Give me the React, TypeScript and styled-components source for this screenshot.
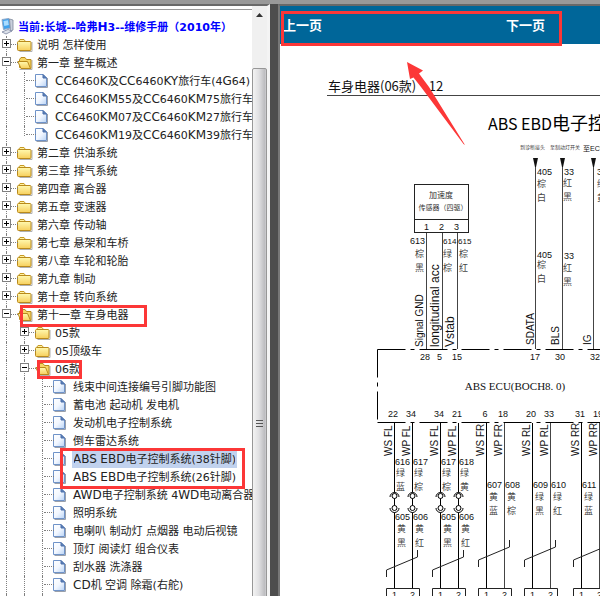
import React from "react";
import styled, { createGlobalStyle, css } from "styled-components";

const GlobalStyle = createGlobalStyle`
  *, *::before, *::after { box-sizing: border-box; }
  html, body { margin: 0; height: 100%; overflow: hidden; background: #ffffff; }
  #root { height: 100%; }
`;

const treeFont = `"DejaVu Sans", "Noto Sans CJK SC", sans-serif`;
const cjkFont = `"Noto Sans CJK SC", sans-serif`;
const cadFont = `"Liberation Sans", "Noto Sans CJK SC", sans-serif`;

const Window = styled.div`
  display: flex;
  flex-direction: column;
  height: 100vh;
  overflow: hidden;
`;

const TopEdge = styled.div`
  flex: none;
  height: 4px;
  background: #999999;
`;

const Frames = styled.div`
  flex: 1;
  min-height: 0;
  display: grid;
  grid-template-columns: 270px 8px minmax(0, 1fr);
`;

const TreeFrame = styled.nav`
  display: flex;
  min-width: 0;
  min-height: 0;
  border-top: 2px solid #696969;
  border-right: 3px solid #f4f4f4;
  background: #ffffff;
`;

const TreePane = styled.div`
  flex: 1;
  min-width: 0;
  overflow: hidden;
  padding-top: 3px;
`;

const Rule = styled.hr`
  height: 1px;
  margin: 0 0 8px;
  border: 0;
  background: #999999;
`;

const Splitter = styled.div`
  background: #4d4d4d;
`;

const Scrollbar = styled.div`
  flex: none;
  width: 15px;
  display: flex;
  flex-direction: column;
  background: #f0f0f0;
`;

const ScrollButton = styled.button`
  flex: none;
  height: 62px;
  padding: 7px 0 0;
  border: 0;
  background: transparent;
  display: flex;
  justify-content: center;
  align-items: flex-start;
`;

const ScrollThumb = styled.div`
  flex: none;
  height: 710px;
  border: 1px solid #979797;
  border-radius: 2px;
  background: linear-gradient(to right, #f3f3f3, #e0e0e2 45%, #bdbdc0 90%, #cfcfd2);
  display: flex;
  flex-direction: column;
  align-items: center;
  justify-content: center;
  gap: 2px;
`;

const Grip = styled.span`
  width: 7px;
  height: 1px;
  background: #555555;
`;

const TreeList = styled.ul`
  list-style: none;
  margin: 0;
  padding: 0;
  font: 11px/18px ${treeFont};
  color: #222222;
`;

const Row = styled.li`
  position: relative;
  display: flex;
  align-items: center;
  height: 18px;
  white-space: nowrap;
`;

const RootRow = styled(Row)`
  gap: 4px;
  font-weight: bold;
  color: #0000ff;
`;

const dotted = "1px dotted #808080";

const Guide = styled.span<{ $line: "full" | "end"; $join?: boolean }>`
  flex: none;
  position: relative;
  width: 18px;
  height: 18px;
  &::before {
    content: "";
    position: absolute;
    left: 6px;
    top: 0;
    height: ${(p) => (p.$line === "full" ? "18px" : "10px")};
    border-left: ${dotted};
  }
  ${(p) =>
    p.$join &&
    css`
      &::after {
        content: "";
        position: absolute;
        left: 8px;
        right: 0;
        top: 8px;
        border-top: ${dotted};
      }
    `}
`;

const Toggle = styled.button`
  position: absolute;
  z-index: 1;
  left: 2px;
  top: 3px;
  width: 9px;
  height: 9px;
  padding: 0;
  border: 0;
  background: #ffffff;
  svg { display: block; }
`;

const IconCell = styled.span`
  flex: none;
  width: 16px;
  height: 16px;
  margin: 0 4px 0 -1px;
  svg { display: block; }
`;

const NodeLink = styled.a<{ $selected?: boolean }>`
  color: inherit;
  text-decoration: none;
  line-height: 15px;
  ${(p) =>
    p.$selected &&
    css`
      background: #c1d2ee;
      outline: 2px solid #c1d2ee;
      outline-offset: -1px;
    `}
`;

const LatinRun = styled.span`
  font-size: 12px;
`;

const Mark = styled.span<{ $left: number; $top: number; $width: number; $height: number }>`
  position: absolute;
  z-index: 2;
  left: ${(p) => p.$left}px;
  top: ${(p) => p.$top}px;
  width: ${(p) => p.$width}px;
  height: ${(p) => p.$height}px;
  border: 3px solid #fc3737;
  pointer-events: none;
`;

const ContentFrame = styled.main`
  min-width: 0;
  min-height: 0;
  overflow: hidden;
  border-top: 2px solid #696969;
  border-left: 2px solid #777777;
  background: #ffffff;
`;

const PagerBar = styled.div`
  position: relative;
  display: flex;
  gap: 184px;
  height: 38px;
  padding: 0 3px;
  background: #006699;
`;

const PagerLink = styled.a`
  color: #ffffff;
  text-decoration: none;
  font: bold 13px/38px ${cjkFont};
`;

const Sheet = styled.article`
  position: relative;
`;

const SheetHeader = styled.header`
  margin: 0 0 0 47px;
  padding: 32px 0 0 1px;
  border-bottom: 1px solid #444444;
  color: #111111;
  font: 13px/19px ${cjkFont};
`;

const SheetNumber = styled.span`
  margin-left: 8px;
`;

const SheetTitle = styled.h1`
  margin: 13px 0 3px 208px;
  color: #000000;
  font: 18px/27px ${cjkFont};
  white-space: nowrap;
`;

const Latin = styled.span`
  font-size: 16px;
`;

const Diagram = styled.svg`
  display: block;
  overflow: visible;
`;

const Arrow = styled.svg`
  position: absolute;
  left: 126px;
  top: 17px;
`;

const FolderIcon = ({ open }: { open?: boolean }) => (
  <svg width="16" height="16" viewBox="0 0 16 16" aria-hidden="true">
    <defs>
      <linearGradient id="folder" x1="0" y1="0" x2="0" y2="1">
        <stop offset="0" stopColor="#fff9b0" />
        <stop offset="1" stopColor="#f7cf5c" />
      </linearGradient>
    </defs>
    <path d="M2.5 14.5h12.500V5" fill="none" stroke="#b0b0b0" />
    {open ? (
      <>
        <path d="M2.500 12.500V4.500l1.500-2h4l1.500 2h4.500v9z" fill="#f5d565" stroke="#b98a1c" />
        <path d="M0.800 6.500h9.700l3 7H4z" fill="url(#folder)" stroke="#b98a1c" />
      </>
    ) : (
      <>
        <path d="M1.500 4.500 3 2.500h4l1.500 2" fill="#fff3a0" stroke="#c79a25" />
        <rect x="0.500" y="4.500" width="13.500" height="9" rx="1" fill="url(#folder)" stroke="#b98a1c" />
      </>
    )}
  </svg>
);

const PageIcon = () => (
  <svg width="16" height="16" viewBox="1 0 16 16" aria-hidden="true">
    <defs>
      <linearGradient id="page" x1="0" y1="0" x2="1" y2="1">
        <stop offset="0" stopColor="#ffffff" />
        <stop offset="0.500" stopColor="#f2f7ff" />
        <stop offset="1" stopColor="#b9d3f5" />
      </linearGradient>
    </defs>
    <path d="M2.500 14.500h11V5" fill="none" stroke="#9aa0aa" />
    <path d="M1.500 1.500h7.500l3.500 3.500v8.500h-11z" fill="url(#page)" stroke="#6f93c9" />
    <path d="M9 1.500v3.500h3.500z" fill="#5f83bd" stroke="#4a6ea8" />
  </svg>
);

const ComputerIcon = () => (
  <svg width="14" height="18" viewBox="0 0 14 18" aria-hidden="true">
    <path d="M2 1.500 9 0.500l1.500 9.500-7 1.500z" fill="#3fa2ee" stroke="#8fa8c8" />
    <path d="M3.500 3 8 2.300l.8 4.700-4.500 1z" fill="#a9dcff" />
    <path d="M9.500 1 13 2v10l-2.500 1.500z" fill="#c9d0dc" stroke="#7c8798" strokeWidth="0.800" />
    <path d="m2 14 6-2.500 4 1.500-6 3z" fill="#dde2ea" stroke="#7a84a0" strokeWidth="0.800" />
  </svg>
);

const ToggleIcon = ({ open }: { open?: boolean }) => (
  <svg width="9" height="9" viewBox="0 0 9 9" aria-hidden="true">
    <rect x="0.500" y="0.500" width="8" height="8" fill="#ffffff" stroke="#808080" />
    <path d={open ? "M2 4.500h5" : "M2 4.500h5M4.500 2v5"} stroke="#000000" />
  </svg>
);

type MarkBox = [left: number, top: number, width: number, height: number];

interface TreeNode {
  label: string;
  level: number;
  kind: "closed" | "open" | "page";
  last?: boolean;
  selected?: boolean;
  mark?: MarkBox;
}

const folder = (label: string, level = 0): TreeNode => ({ label, level, kind: "closed" });
const page = (label: string, level: number, extra: Partial<TreeNode> = {}): TreeNode => ({
  label,
  level,
  kind: "page",
  ...extra,
});

const nodes: TreeNode[] = [
  folder("说明 怎样使用"),
  { label: "第一章 整车概述", level: 0, kind: "open" },
  page("CC6460K及CC6460KY旅行车(4G64)", 1),
  page("CC6460KM55及CC6460KM75旅行车", 1),
  page("CC6460KM07及CC6460KM27旅行车", 1),
  page("CC6460KM19及CC6460KM39旅行车", 1, { last: true }),
  folder("第二章 供油系统"),
  folder("第三章 排气系统"),
  folder("第四章 离合器"),
  folder("第五章 变速器"),
  folder("第六章 传动轴"),
  folder("第七章 悬架和车桥"),
  folder("第八章 车轮和轮胎"),
  folder("第九章 制动"),
  folder("第十章 转向系统"),
  { label: "第十一章 车身电器", level: 0, kind: "open", mark: [20, -1, 127, 22] },
  folder("05款", 1),
  folder("05顶级车", 1),
  { label: "06款", level: 1, kind: "open", mark: [37, 0, 45, 19] },
  page("线束中间连接编号引脚功能图", 2),
  page("蓄电池 起动机 发电机", 2),
  page("发动机电子控制系统", 2),
  page("倒车雷达系统", 2),
  page("ABS EBD电子控制系统(38针脚)", 2, { selected: true, mark: [60, -2, 185, 41] }),
  page("ABS EBD电子控制系统(26针脚)", 2),
  page("AWD电子控制系统 4WD电动离合器", 2),
  page("照明系统", 2),
  page("电喇叭 制动灯 点烟器 电动后视镜", 2),
  page("顶灯 阅读灯 组合仪表", 2),
  page("刮水器 洗涤器", 2),
  page("CD机 空调 除霜(右舵)", 2),
  page("音响系统", 2),
];

const Mixed = ({ text }: { text: string }) => (
  <>
    {text.split(/([A-Z]+)/).map((part, i) => (i % 2 ? <LatinRun key={i}>{part}</LatinRun> : part))}
  </>
);

const TreeRow = ({ node }: { node: TreeNode }) => (
  <Row>
    {Array.from({ length: node.level }, (_, i) => (
      <Guide key={i} $line="full" />
    ))}
    <Guide $line={node.last ? "end" : "full"} $join>
      {node.kind !== "page" && (
        <Toggle aria-label={node.label} aria-expanded={node.kind === "open"}>
          <ToggleIcon open={node.kind === "open"} />
        </Toggle>
      )}
    </Guide>
    <IconCell>{node.kind === "page" ? <PageIcon /> : <FolderIcon open={node.kind === "open"} />}</IconCell>
    <NodeLink href="#" $selected={node.selected}>
      <Mixed text={node.label} />
    </NodeLink>
    {node.mark && (
      <Mark $left={node.mark[0]} $top={node.mark[1]} $width={node.mark[2]} $height={node.mark[3]} />
    )}
  </Row>
);

const Label = ({ x, y, children, size = 9 }: { x: number; y: number; children: string; size?: number }) => (
  <text x={x} y={y} fontSize={size}>
    {children}
  </text>
);

const Vertical = ({ x, y, children, size = 10 }: { x: number; y: number; children: string; size?: number }) => (
  <text transform={`translate(${x} ${y}) rotate(-90)`} fontSize={size}>
    {children}
  </text>
);

const Colours = ({ x, y, names }: { x: number; y: number; names: string }) => (
  <g fill="#444444" fontSize="9">
    <text x={x} y={y}>{names[0]}</text>
    <text x={x} y={y + 14}>{names[1]}</text>
  </g>
);

const Wire = ({ x, from, to, dark }: { x: number; from: number; to: number; dark?: boolean }) => (
  <path d={`M${x} ${from}V${to}`} stroke={dark ? "#000000" : "#444444"} />
);

const pairs = [
  { x: 394, pins: ["22", "34"], end: "FL", upper: ["616", "617"], upperColours: ["绿蓝", "绿棕"], lower: ["605", "606"], colours: ["黄黑", "黄红"] },
  { x: 440, pins: ["34", "21"], end: "FL", upper: ["617", "618"], upperColours: ["绿棕", "绿黄"], lower: ["605", "606"], colours: ["黄黑", "黄红"] },
  { x: 486, pins: ["6", "18"], end: "FR", lower: ["607", "608"], colours: ["黄蓝", "黄棕"] },
  { x: 532, pins: ["20", "33"], end: "RL", lower: ["609", "610"], colours: ["绿黑", "绿红"] },
  { x: 581, pins: ["31", "19"], end: "RR", lower: ["611", "612"], colours: ["绿蓝", "绿黄"] },
];

const Coupling = ({ x }: { x: number }) => (
  <g fill="#ffffff" stroke="#000000">
    <path d={`M${x - 4.5} 497a4.500 4.500 0 1 1 9 0`} />
    <circle cx={x} cy="496" r="2.500" />
    <path d={`M${x - 4.5} 508a4.500 4.500 0 1 0 9 0`} />
    <circle cx={x} cy="508" r="2.500" />
  </g>
);

const WiringDiagram = () => (
  <Diagram width="100%" height="456" viewBox="280 140 320 456" preserveAspectRatio="xMinYMin slice" fontFamily={cadFont} fill="#111111" role="img" aria-label="ABS EBD电子控制系统">
    <g fill="none" stroke="#222222">
      <rect x="414.500" y="184.500" width="54" height="48" />
      <path d="M414.500 219.500h54" />
    </g>
    <g fill="#333333" textAnchor="middle">
      <text x="441" y="198" fontSize="8">加速度</text>
      <text x="443" y="210" fontSize="7">传感器（四驱）</text>
    </g>
    <Label x={424} y={230}>1</Label>
    <Label x={439} y={230}>2</Label>
    <Label x={454} y={230}>3</Label>

    <Wire x={426.5} from={233} to={349} />
    <Wire x={442.5} from={233} to={349} />
    <Wire x={457.5} from={233} to={349} />
    <Label x={410} y={244}>613</Label>
    <Label x={443} y={244} size={8}>614</Label>
    <Label x={458} y={244} size={8}>615</Label>
    <Colours x={415} y={257} names="棕黑" />
    <Colours x={443} y={257} names="绿棕" />
    <Colours x={459} y={257} names="棕红" />
    <Vertical x={423} y={347}>Signal GND</Vertical>
    <Vertical x={439} y={347} size={12}>longitudinal acc</Vertical>
    <Vertical x={454} y={347} size={12}>Vstab</Vertical>

    <g fill="#444444" fontSize="5">
      <text x="520" y="149">到诊断接头</text>
      <text x="550" y="149">至制动灯开关</text>
    </g>
    <Label x={583} y={151} size={7}>至ECU</Label>
    <g fill="#111111">
      {[535.5, 562.5, 593.5].map((x) => (
        <React.Fragment key={x}>
          <Wire x={x} from={158} to={349} />
          <path d={`M${x - 2.5} 158h5l-2 9h-1z`} />
        </React.Fragment>
      ))}
    </g>
    <Label x={537} y={175}>405</Label>
    <Colours x={537} y={187} names="棕白" />
    <Label x={564} y={175}>33</Label>
    <Colours x={563} y={186} names="红黑" />
    <Label x={597} y={175}>31</Label>
    <Colours x={597} y={187} names="绿黄" />
    <Label x={537} y={258}>405</Label>
    <Colours x={537} y={268} names="棕白" />
    <Label x={564} y={259}>33</Label>
    <Colours x={563} y={271} names="红黑" />
    <Vertical x={534} y={345}>SDATA</Vertical>
    <Vertical x={559} y={345}>BLS</Vertical>
    <Vertical x={591} y={345}>IG</Vertical>

    <g fill="none" stroke="#000000" strokeDasharray="28 5 4 5">
      <path d="M377.500 349.500H640" />
      <path d="M377.500 422.500H640" />
      <path d="M377.500 349.500V422" />
    </g>
    <Label x={420} y={360}>28</Label>
    <Label x={437} y={360}>5</Label>
    <Label x={452} y={360}>15</Label>
    <Label x={530} y={360}>17</Label>
    <Label x={555} y={360}>30</Label>
    <Label x={590} y={360}>32</Label>
    <text x="515" y="390" fontSize="11" fontFamily="Liberation Serif, serif" textAnchor="middle">
      ABS ECU(BOCH8. 0)
    </text>

    {pairs.map((pair, n) => {
      const direct = !pair.upper;
      const bend = direct ? -10 : 0;
      const numberY = direct ? 488 : 520;
      return (
        <g key={pair.x}>
          {[0, 1].map((side) => {
            const x = pair.x + side * 18;
            return (
              <g key={side}>
                <Wire x={x + 0.5} from={423} to={588} dark={n < 2 || side === 0} />
                <text x={x - 1} y={417} fontSize="9" textAnchor="middle">{pair.pins[side]}</text>
                <Vertical x={x - 2} y={456}>{`${side ? "WP" : "WS"} ${pair.end}`}</Vertical>
                {pair.upper && (
                  <>
                    <Label x={x + 1} y={465}>{pair.upper[side]}</Label>
                    <Colours x={x + 2} y={476} names={pair.upperColours[side]} />
                    <Coupling x={x + 0.5} />
                  </>
                )}
                <Label x={x + 1} y={numberY}>{pair.lower[side]}</Label>
                <Colours x={x + 3} y={numberY + 12} names={pair.colours[side]} />
                <Label x={x - 2} y={598}>{side ? "2" : "1"}</Label>
              </g>
            );
          })}
          <path
            d={`M${pair.x - 7.5} ${577 + bend}v-7l31 -13v-7`}
            fill="none"
            stroke="#222222"
          />
          <path d={`M${pair.x - 7.5} 596v-7.500h33v7.500`} fill="none" stroke="#222222" />
        </g>
      );
    })}
  </Diagram>
);

export default function App() {
  return (
    <>
      <GlobalStyle />
      <Window>
        <TopEdge />
        <Frames>
          <TreeFrame>
            <TreePane>
              <Rule />
              <TreeList>
                <RootRow>
                  <ComputerIcon />
                  <span>
                    <Mixed text="当前:长城--哈弗H3--维修手册（2010年）" />
                  </span>
                </RootRow>
                {nodes.map((node) => (
                  <TreeRow key={node.label} node={node} />
                ))}
              </TreeList>
            </TreePane>
            <Scrollbar>
              <ScrollButton aria-label="向上滚动">
                <svg width="7" height="4" viewBox="0 0 7 4" aria-hidden="true">
                  <path d="M0 4 3.500 0 7 4z" fill="#333333" />
                </svg>
              </ScrollButton>
              <ScrollThumb>
                <Grip />
                <Grip />
                <Grip />
              </ScrollThumb>
            </Scrollbar>
          </TreeFrame>
          <Splitter />
          <ContentFrame>
            <PagerBar>
              <PagerLink href="#">上一页</PagerLink>
              <PagerLink href="#">下一页</PagerLink>
              <Mark $left={1} $top={5} $width={281} $height={35} />
            </PagerBar>
            <Sheet>
              <SheetHeader>
                车身电器(06款)
                <SheetNumber>-12</SheetNumber>
              </SheetHeader>
              <SheetTitle>
                <Latin>ABS EBD</Latin>电子控制系统
              </SheetTitle>
              <WiringDiagram />
              <Arrow width="60" height="86" viewBox="0 0 60 86" aria-hidden="true">
                <path d="M1 1 17 9.500 13 12.500 23 26 59 84 57.500 83 15 26 7.500 16.500 4 18z" fill="#fc3737" />
              </Arrow>
            </Sheet>
          </ContentFrame>
        </Frames>
      </Window>
    </>
  );
}
